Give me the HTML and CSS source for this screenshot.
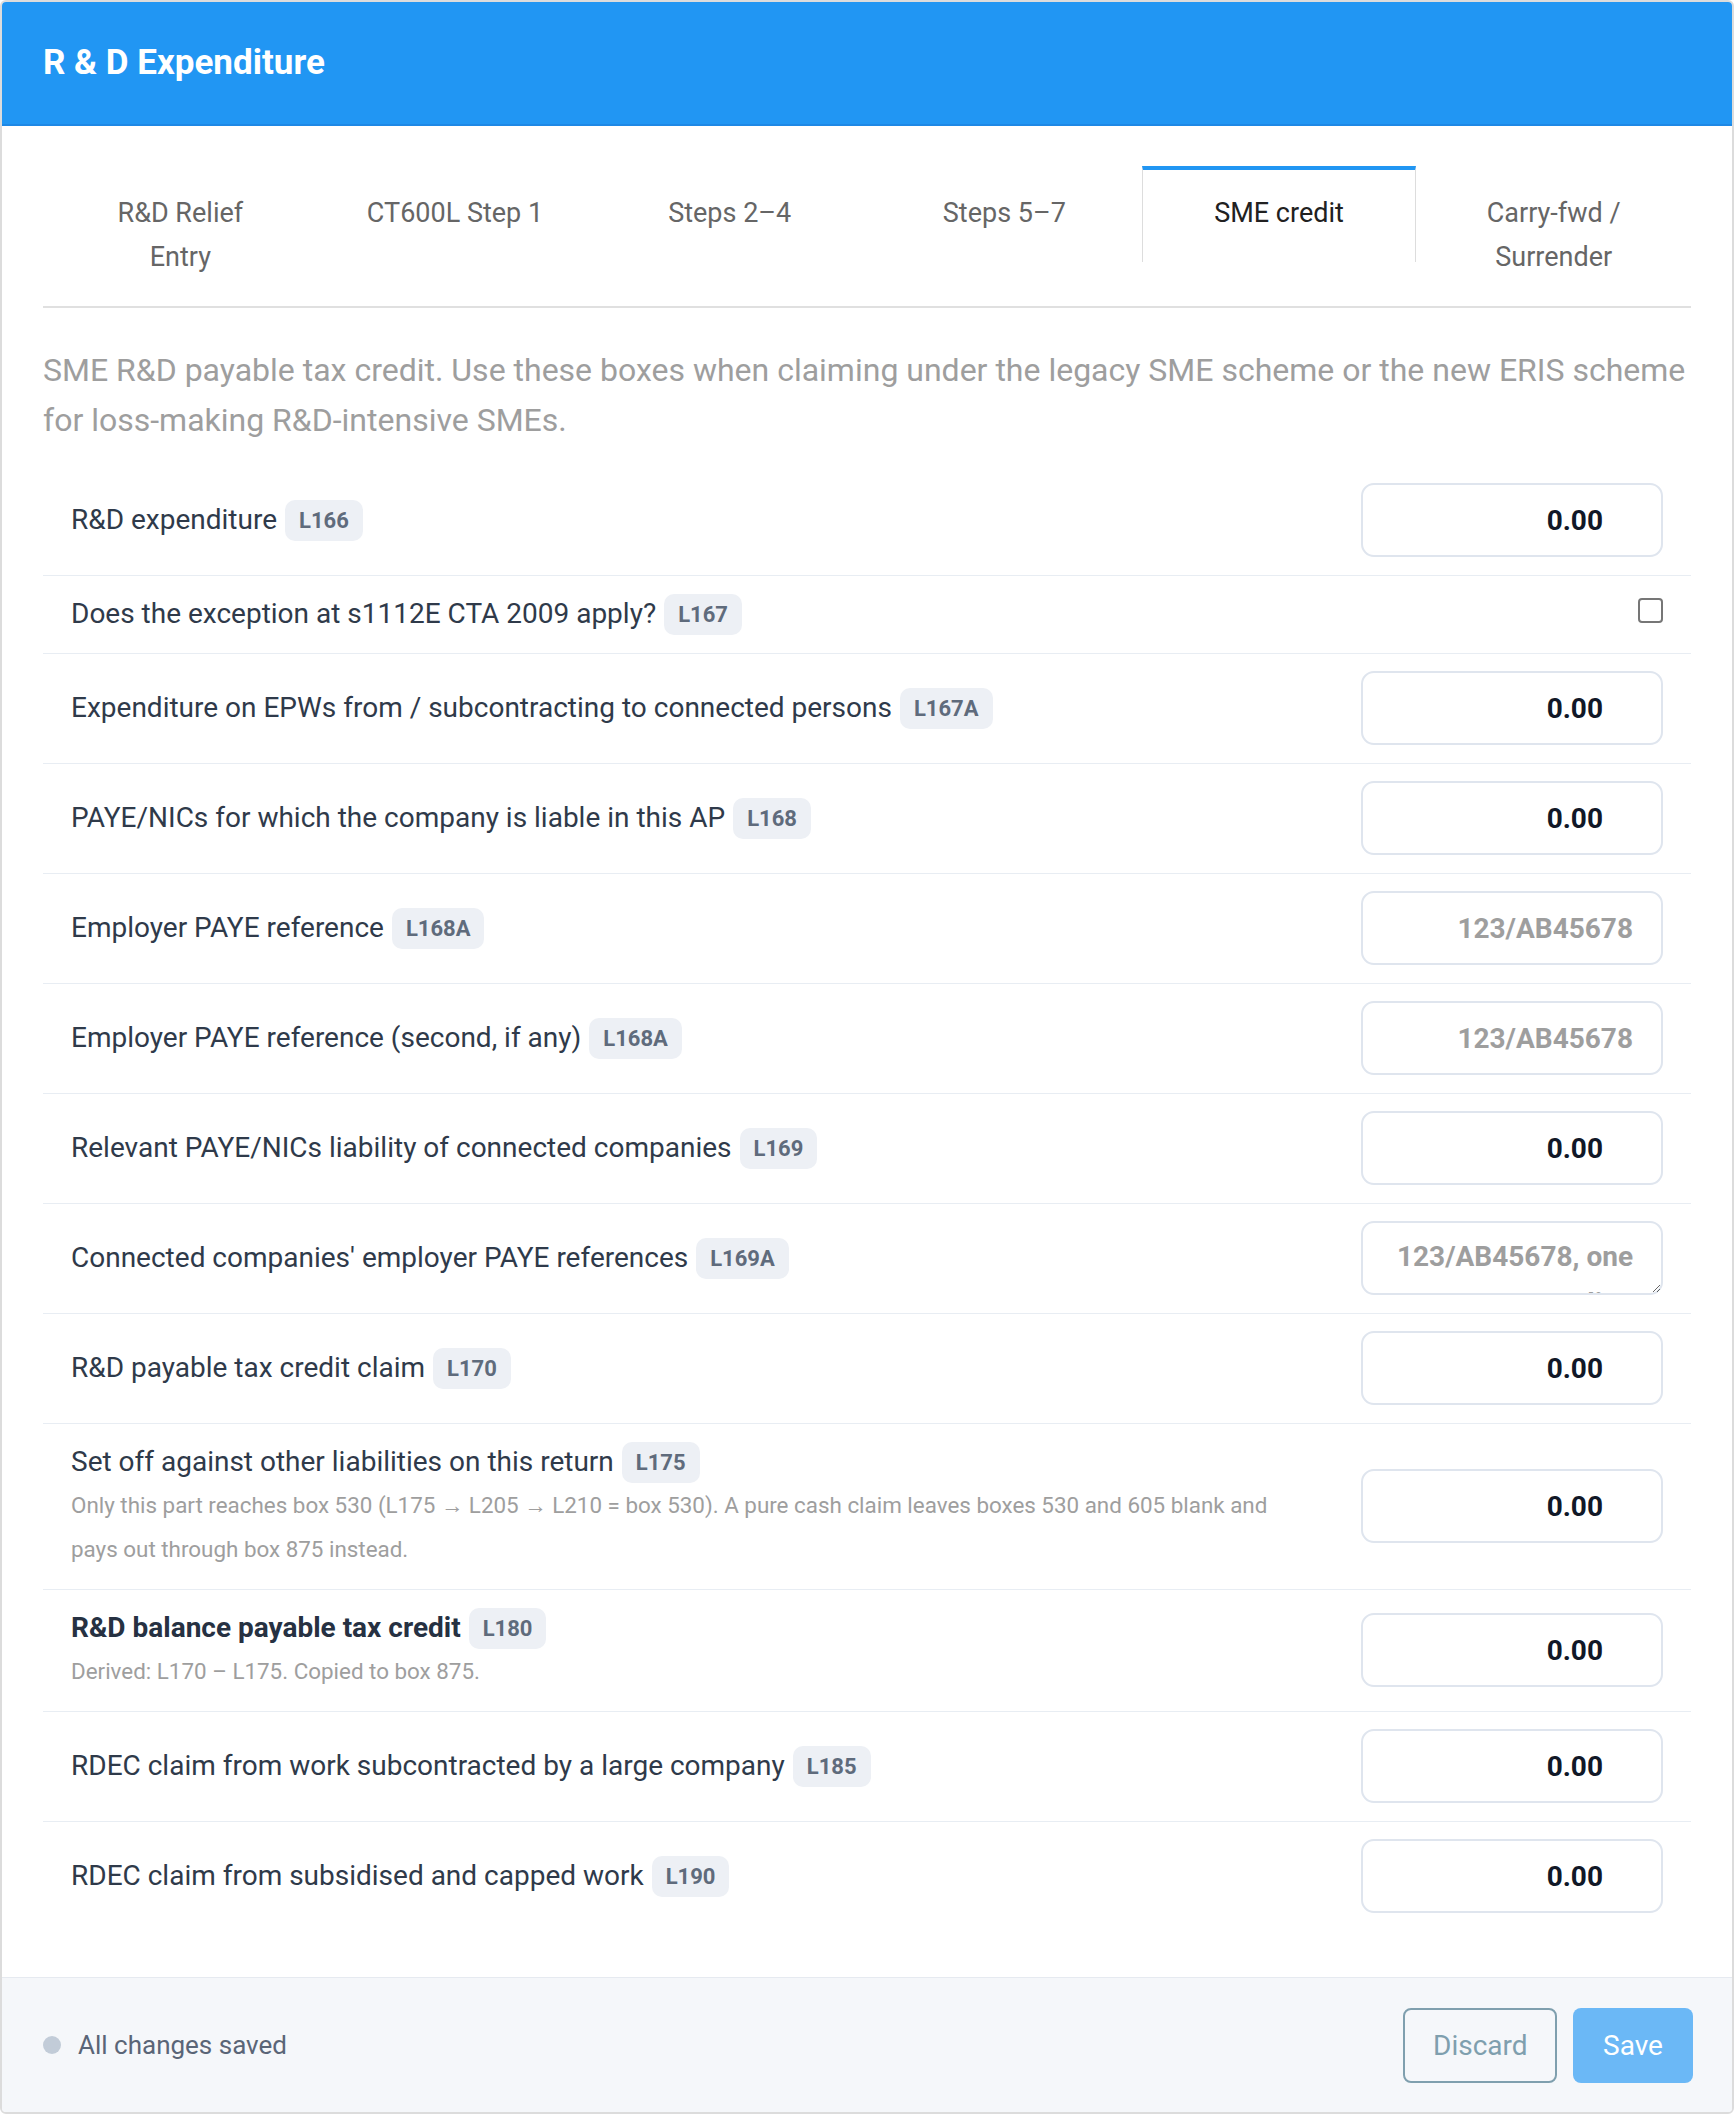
FILE: index.html
```html
<!DOCTYPE html>
<html lang="en">
<head>
<meta charset="utf-8">
<title>R &amp; D Expenditure</title>
<link rel="stylesheet" href="styles.css">
</head>
<body>
<div class="card">
  <header class="card-header">
    <h1 class="title">R &amp; D Expenditure</h1>
  </header>

  <div class="card-body">
    <nav class="tabs">
      <div class="tab">R&amp;D Relief Entry</div>
      <div class="tab">CT600L Step 1</div>
      <div class="tab">Steps 2–4</div>
      <div class="tab">Steps 5–7</div>
      <div class="tab active">SME credit</div>
      <div class="tab">Carry-fwd / Surrender</div>
    </nav>

    <p class="intro">SME R&amp;D payable tax credit. Use these boxes when claiming under the legacy SME scheme or the new ERIS scheme for loss-making R&amp;D-intensive SMEs.</p>

    <div class="rows">
      <div class="row">
        <div class="label-col"><div class="label-line"><span class="label">R&amp;D expenditure</span><span class="badge">L166</span></div></div>
        <input class="field num" type="text" value="0.00">
      </div>
      <div class="row">
        <div class="label-col"><div class="label-line"><span class="label">Does the exception at s1112E CTA 2009 apply?</span><span class="badge">L167</span></div></div>
        <input class="check" type="checkbox">
      </div>
      <div class="row">
        <div class="label-col"><div class="label-line"><span class="label">Expenditure on EPWs from / subcontracting to connected persons</span><span class="badge">L167A</span></div></div>
        <input class="field num" type="text" value="0.00">
      </div>
      <div class="row">
        <div class="label-col"><div class="label-line"><span class="label">PAYE/NICs for which the company is liable in this AP</span><span class="badge">L168</span></div></div>
        <input class="field num" type="text" value="0.00">
      </div>
      <div class="row">
        <div class="label-col"><div class="label-line"><span class="label">Employer PAYE reference</span><span class="badge">L168A</span></div></div>
        <input class="field ref" type="text" placeholder="123/AB45678">
      </div>
      <div class="row">
        <div class="label-col"><div class="label-line"><span class="label">Employer PAYE reference (second, if any)</span><span class="badge">L168A</span></div></div>
        <input class="field ref" type="text" placeholder="123/AB45678">
      </div>
      <div class="row">
        <div class="label-col"><div class="label-line"><span class="label">Relevant PAYE/NICs liability of connected companies</span><span class="badge">L169</span></div></div>
        <input class="field num" type="text" value="0.00">
      </div>
      <div class="row">
        <div class="label-col"><div class="label-line"><span class="label">Connected companies' employer PAYE references</span><span class="badge">L169A</span></div></div>
        <textarea class="field area" placeholder="123/AB45678, one per line"></textarea>
      </div>
      <div class="row">
        <div class="label-col"><div class="label-line"><span class="label">R&amp;D payable tax credit claim</span><span class="badge">L170</span></div></div>
        <input class="field num" type="text" value="0.00">
      </div>
      <div class="row">
        <div class="label-col">
          <div class="label-line"><span class="label">Set off against other liabilities on this return</span><span class="badge">L175</span></div>
          <div class="help">Only this part reaches box 530 (L175 → L205 → L210 = box 530). A pure cash claim leaves boxes 530 and 605 blank and pays out through box 875 instead.</div>
        </div>
        <input class="field num" type="text" value="0.00">
      </div>
      <div class="row">
        <div class="label-col">
          <div class="label-line"><span class="label strong">R&amp;D balance payable tax credit</span><span class="badge">L180</span></div>
          <div class="help">Derived: L170 – L175. Copied to box 875.</div>
        </div>
        <input class="field num" type="text" value="0.00">
      </div>
      <div class="row">
        <div class="label-col"><div class="label-line"><span class="label">RDEC claim from work subcontracted by a large company</span><span class="badge">L185</span></div></div>
        <input class="field num" type="text" value="0.00">
      </div>
      <div class="row">
        <div class="label-col"><div class="label-line"><span class="label">RDEC claim from subsidised and capped work</span><span class="badge">L190</span></div></div>
        <input class="field num" type="text" value="0.00">
      </div>
    </div>
  </div>

  <footer class="card-footer">
    <div class="status"><span class="dot"></span><span>All changes saved</span></div>
    <div class="actions">
      <button class="btn btn-outline" type="button">Discard</button>
      <button class="btn btn-primary" type="button">Save</button>
    </div>
  </footer>
</div>
</body>
</html>
```

FILE: styles.css
```css
* { box-sizing: border-box; }

html, body {
  margin: 0;
  padding: 0;
  background: #ffffff;
}

body {
  font-family: Roboto, "Liberation Sans", Arial, sans-serif;
  color: #2f3a4a;
}

.card {
  width: 1734px;
  height: 2114px;
  border: 2px solid #dcdcdc;
  border-radius: 6px;
  overflow: hidden;
  display: flex;
  flex-direction: column;
  background: #fff;
}

.card-header {
  height: 124px;
  background: #2196f3;
  border-bottom: 2px solid #1e88e5;
  display: flex;
  align-items: center;
  padding: 0 41px 2px;
  flex: none;
}

.title {
  margin: 0;
  color: #ffffff;
  font-size: 35px;
  font-weight: 700;
}

.card-body {
  flex: 1;
  padding: 40px 41px 0;
}

.tabs {
  display: flex;
  align-items: flex-start;
  border-bottom: 2px solid #e0e0e0;
}

.tab {
  flex: 1 1 0;
  text-align: center;
  font-size: 27px;
  line-height: 44px;
  color: #666666;
  padding: 21px 40px 27px;
  border-top: 4px solid transparent;
  border-left: 1px solid transparent;
  border-right: 1px solid transparent;
}

.tab.active {
  color: #212121;
  border-top-color: #2196f3;
  border-left-color: #dddddd;
  border-right-color: #dddddd;
}

.intro {
  margin: 37px 0 21px;
  font-size: 32px;
  line-height: 50px;
  color: #9e9e9e;
}

.rows {
  display: flex;
  flex-direction: column;
}

.row {
  display: flex;
  align-items: center;
  justify-content: space-between;
  gap: 80px;
  padding: 17px 28px 18px;
  border-bottom: 1px solid #e8edf3;
}

.row:last-child {
  border-bottom: none;
}

.label-col {
  flex: 1;
  min-width: 0;
}

.label-line {
  display: flex;
  align-items: center;
  min-height: 42px;
}

.label {
  font-size: 28px;
  line-height: 42px;
  color: #2f3a4a;
}

.label.strong {
  font-weight: 700;
  color: #263142;
}

.badge {
  margin-left: 8px;
  height: 41px;
  padding: 0 14px;
  display: inline-flex;
  align-items: center;
  border-radius: 10px;
  background: #edf0f5;
  color: #5f6b7c;
  font-size: 22px;
  font-weight: 700;
}

.help {
  font-size: 22.4px;
  line-height: 44px;
  color: #9e9e9e;
}

.field {
  flex: none;
  width: 302px;
  height: 74px;
  border: 2px solid #dfe5ee;
  border-radius: 13px;
  background: #fff;
  font-family: Roboto, "Liberation Sans", Arial, sans-serif;
  font-size: 28px;
  font-weight: 700;
  color: #111827;
  text-align: right;
  outline: none;
}

.field::placeholder {
  color: #9e9e9e;
  opacity: 1;
}

.field.num {
  padding: 0 58px 0 16px;
}

.field.ref {
  padding: 0 28px 0 16px;
}

.field.area {
  padding: 10px 28px 0 20px;
  line-height: 47px;
  resize: both;
  overflow: hidden;
  display: block;
}

.check {
  appearance: none;
  -webkit-appearance: none;
  margin: 0 0 8px;
  width: 25px;
  height: 25px;
  border: 2px solid #767676;
  border-radius: 4px;
  background: #fff;
  flex: none;
}

.card-footer {
  flex: none;
  height: 135px;
  background: #f5f7fa;
  border-top: 1px solid #e6eaf0;
  padding: 0 39px 0 41px;
  display: flex;
  align-items: center;
  justify-content: space-between;
}

.status {
  display: flex;
  align-items: center;
  gap: 17px;
  font-size: 26px;
  color: #5a6577;
}

.dot {
  width: 18px;
  height: 18px;
  border-radius: 50%;
  background: #c2ccd8;
}

.actions {
  display: flex;
  gap: 16px;
}

.btn {
  height: 75px;
  border-radius: 8px;
  font-family: Roboto, "Liberation Sans", Arial, sans-serif;
  font-size: 28px;
  padding: 0 28px;
  cursor: pointer;
}

.btn-outline {
  background: transparent;
  border: 2px solid #7f9fae;
  color: #7f9fae;
  width: 154px;
}

.btn-primary {
  background: #6bb8f6;
  border: none;
  color: #ffffff;
  width: 120px;
}
```
